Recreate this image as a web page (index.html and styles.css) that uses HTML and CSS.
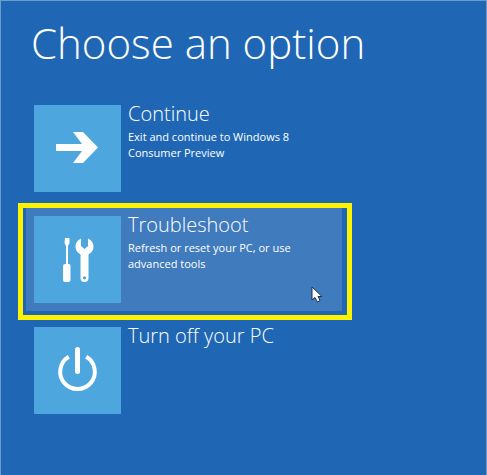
FILE: index.html
```html
<!DOCTYPE html>
<html lang="en">
<head>
    <meta charset="utf-8">
    <title>Choose an option</title>
    <meta name="viewport" content="width=device-width, initial-scale=1.0">
    <link rel="stylesheet" href="styles.css">
</head>
<body>
    <main class="screen">
        <h1>Choose an option</h1>

        <div class="options">
            <button type="button" class="option">
                <span class="tile">
                    <svg viewBox="0 0 87 87" aria-hidden="true">
                        <path fill="#fff" d="M22 39H48L39 27H49L64 42.500L49 58H39L48 46H22Z"/>
                    </svg>
                </span>
                <span class="text">
                    <span class="name">Continue</span>
                    <span class="info">Exit and continue to Windows 8 Consumer Preview</span>
                </span>
            </button>

            <button type="button" class="option active">
                <span class="tile">
                    <svg viewBox="0 0 87 87" aria-hidden="true">
                        <!-- screwdriver -->
                        <path fill="#fff" d="M31 22H35.500V27L34 30V48H35Q36.500 48 36.500 50V64Q36.500 66 34.500 66H31Q29 66 29 64V50Q29 48 31 48H32V30L30.500 27Z"/>
                        <!-- wrench -->
                        <path fill="#fff" fill-rule="evenodd" d="M47 22.500V30L50.500 33L54 30V22.500C57.500 24 59.500 27 59.500 30.500C59.500 34.500 57.500 36.500 54.500 38.500V62A4 4 0 0 1 46.500 62V38.500C43.500 36.500 41.500 34.500 41.500 30.500C41.500 27 43.500 24 47 22.500ZM50.500 60.200A1.600 1.600 0 1 0 50.500 63.400A1.600 1.600 0 1 0 50.500 60.200Z"/>
                    </svg>
                </span>
                <span class="text">
                    <span class="name">Troubleshoot</span>
                    <span class="info">Refresh or reset your PC, or use advanced tools</span>
                </span>
                <svg class="cursor" viewBox="0 0 12 17" aria-hidden="true">
                    <path fill="#fff" stroke="#1c3250" d="M1 1V14L4 11.500L6.500 16L9 14.500L7 10.500H11Z"/>
                </svg>
            </button>

            <button type="button" class="option">
                <span class="tile">
                    <svg viewBox="0 0 87 87" aria-hidden="true">
                        <path fill="none" stroke="#fff" stroke-width="4" d="M34.800 29.800A17.300 17.300 0 1 0 52.200 29.800"/>
                        <path fill="none" stroke="#fff" stroke-width="5" stroke-linecap="round" d="M43.500 22.500V44.500"/>
                    </svg>
                </span>
                <span class="text">
                    <span class="name">Turn off your PC</span>
                </span>
            </button>
        </div>
    </main>
</body>
</html>
```

FILE: styles.css
```css
* {
    box-sizing: border-box;
}
body {
    margin: 0;
    background-color: #1f67b5;
    color: #fff;
    font-family: "Open Sans", "Noto Sans", sans-serif;
}
.screen {
    min-height: 100vh;
    padding: 12px 25px;
    border: 1px solid #6b9bcd;
    border-bottom: none;
}
h1 {
    margin: 0 0 24px;
    padding-left: 5px;
    font-size: 42px;
    font-weight: 300;
    line-height: 60px;
}
.options {
    display: flex;
    flex-direction: column;
    gap: 8px;
    max-width: 316px;
}
.option {
    position: relative;
    display: flex;
    align-items: flex-start;
    gap: 7px;
    width: 100%;
    padding: 8px;
    border: none;
    background: none;
    color: inherit;
    font-family: inherit;
    text-align: left;
    cursor: pointer;
}
.option.active {
    background-color: #3f7bbd;
}
/* yellow highlight box around the selected option */
.option.active::after {
    content: "";
    position: absolute;
    inset: -5px -10px -9px -8px;
    border: 5px solid #fff200;
}
.tile {
    flex: none;
    width: 87px;
    height: 87px;
    background-color: #4da6dd;
}
.tile svg {
    display: block;
}
.text {
    max-width: 180px;
}
.name {
    display: block;
    margin-bottom: 6px;
    font-size: 20px;
    font-weight: 300;
    line-height: 18px;
}
.info {
    display: block;
    font-size: 11px;
    line-height: 16px;
}
.cursor {
    position: absolute;
    right: 19px;
    bottom: 8px;
    width: 12px;
    height: 17px;
}
```
